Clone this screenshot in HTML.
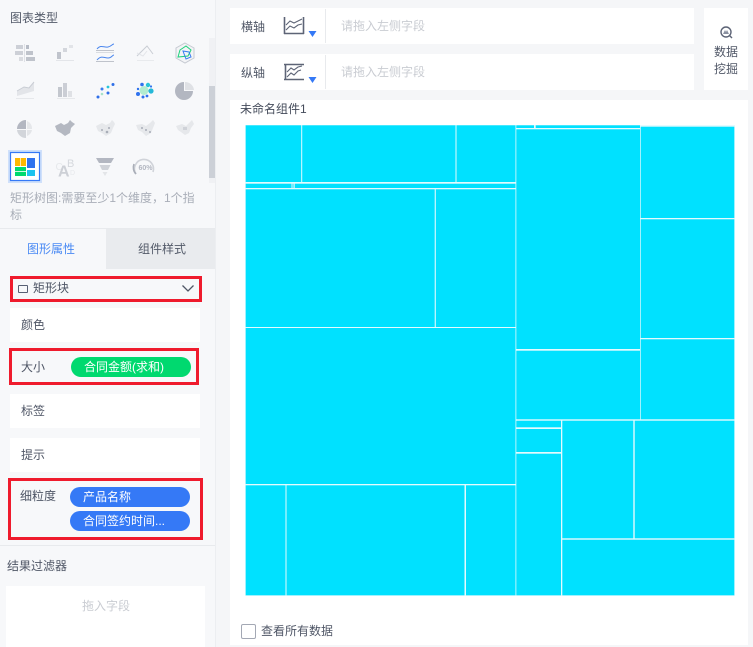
<!DOCTYPE html>
<html lang="zh">
<head>
<meta charset="utf-8">
<style>
html,body{margin:0;padding:0;width:753px;height:647px;overflow:hidden;background:#f5f6f8;}
body{position:relative;font-family:"Liberation Sans","Noto Sans CJK SC",sans-serif;font-size:12px;color:#4f5666;}
.a{position:absolute;}
.t{position:absolute;white-space:nowrap;line-height:16px;}
.w{position:absolute;background:#fff;}
.r{position:absolute;border:3px solid #ef1b2d;box-sizing:border-box;}
.p{position:absolute;border-radius:10px;height:20px;line-height:20px;color:#fff;font-size:12px;white-space:nowrap;box-sizing:border-box;padding-left:13px;}
</style>
</head>
<body>
<div class="a" style="left:0;top:0;width:215px;height:647px;background:#f7f8fa;"></div>
<div class="a" style="left:215px;top:0;width:1px;height:647px;background:#eceef1;"></div>
<div class="t" style="left:10px;top:10px;color:#535a69;">图表类型</div>

<!-- scrollbar -->
<div class="a" style="left:209px;top:38px;width:6px;height:145px;background:#f0f1f4;"></div>
<div class="a" style="left:209px;top:86px;width:6px;height:92px;background:#ccd0d7;"></div>

<!-- chart icons -->
<svg class="a" style="left:0;top:0;" width="215" height="190" viewBox="0 0 215 190">
  <!-- bar grid -->
  <g fill="#cdd0d7">
    <rect x="16" y="45" width="7" height="4"/><rect x="26" y="45" width="3" height="4" fill="#b7bcc6"/>
    <rect x="15" y="51" width="8" height="4"/><rect x="26" y="51" width="7" height="4" fill="#bfc3cb"/>
    <rect x="19" y="57" width="4" height="4" fill="#d9dbe0"/><rect x="26" y="57" width="9" height="4" fill="#bfc3cb"/>
    <rect x="24" y="44" width="1" height="18" fill="#dfe1e6"/>
  </g>
  <!-- stepped -->
  <rect x="57" y="52" width="4" height="7" fill="#c0c4cc"/>
  <rect x="63" y="48" width="4" height="4" fill="#d3d6dc"/>
  <rect x="69" y="45" width="4" height="3" fill="#e2e4e8"/>
  <rect x="56" y="60" width="18" height="1" fill="#e3e5e9"/>
  <!-- wave lines -->
  <g fill="none">
    <path d="M97 49C101 44 104 48 108 47S112 44 114 44" stroke="#4a86ee" stroke-width="1"/>
    <rect x="96" y="50" width="18" height="1" fill="#bfc3cb"/>
    <rect x="96" y="52" width="18" height="1" fill="#d9dce1"/>
    <path d="M97 60C101 55 104 58 108 58S112 55 114 55" stroke="#4a86ee" stroke-width="1"/>
    <rect x="96" y="61" width="18" height="1" fill="#bfc3cb"/>
  </g>
  <!-- area line -->
  <path d="M137 56L147 46L153 54" fill="none" stroke="#c9cdd4" stroke-width="1"/>
  <path d="M137 53L143 56L147 51" fill="none" stroke="#e3e5e9" stroke-width="1"/>
  <rect x="137" y="60" width="17" height="1" fill="#e8eaed"/>
  <!-- radar -->
  <path d="M185 43L194 48V58L185 63L176 58V48Z" fill="#f3f4f6" stroke="#c5c9d1" stroke-width="1"/>
  <path d="M180 50L186 46L191 50L188 56L178 57Z" fill="none" stroke="#1fd07c" stroke-width="1"/>
  <path d="M183 51L189 52L191 57L186 59Z" fill="none" stroke="#3a7cf0" stroke-width="1"/>
  <!-- area 2 -->
  <path d="M17 91L24 87L29 88L34 82V91L24 94L17 96Z" fill="#e3e5e9"/>
  <path d="M17 91L24 87L29 88L34 82" fill="none" stroke="#c9cdd4" stroke-width="1"/>
  <rect x="16" y="98" width="18" height="1" fill="#e6e8eb"/>
  <!-- columns -->
  <rect x="58" y="87" width="4" height="10" fill="#c3c7ce"/>
  <rect x="63" y="83" width="4" height="14" fill="#cbced5"/>
  <rect x="68" y="91" width="4" height="6" fill="#dfe1e5"/>
  <rect x="57" y="98" width="18" height="1" fill="#e6e8eb"/>
  <!-- scatter -->
  <circle cx="98" cy="97" r="1.5" fill="#2f6fe8"/><circle cx="102" cy="94" r="1.3" fill="#a8e3c8"/>
  <circle cx="102" cy="89" r="1.5" fill="#3a7cf0"/><circle cx="108" cy="93" r="1.5" fill="#2f6fe8"/>
  <circle cx="108" cy="87" r="1.4" fill="#26c6da"/><circle cx="113" cy="84.500" r="1.500" fill="#2f6fe8"/>
  <!-- bubble -->
  <circle cx="144" cy="90.500" r="4.500" fill="#b2ecd0"/>
  <circle cx="142" cy="84.500" r="1.800" fill="#2f72ee"/><circle cx="148" cy="85" r="2.200" fill="#29c4d8"/>
  <circle cx="151" cy="91" r="2.600" fill="#25b8d8"/><circle cx="138" cy="94" r="2" fill="#2f72ee"/>
  <circle cx="138" cy="89" r="1.200" fill="#2f72ee"/><circle cx="143" cy="97" r="1.500" fill="#2f72ee"/>
  <circle cx="147" cy="96" r="1.400" fill="#2f72ee"/><circle cx="151" cy="86.500" r="1.100" fill="#2f72ee"/>
  <!-- pie -->
  <path d="M184 82V91H193A9 9 0 1 1 184 82Z" fill="#b3b7c1"/>
  <path d="M185 82A9 9 0 0 1 194 90H185Z" fill="#dfe1e5"/>
  <!-- pie 2 -->
  <path d="M26 120V129H17A9 9 0 0 1 26 120Z" fill="#b3b7c1"/>
  <path d="M26 130V138A9 9 0 0 1 17 130Z" fill="#d2d5da"/>
  <path d="M27 121A8 8 0 0 1 32 129H27Z" fill="#e5e7ea"/>
  <path d="M27 130H32A8 8 0 0 1 27 136Z" fill="#e3e5e8"/>
  <!-- maps -->
  <path d="M55 126L61 123L64 125L68 123L70 120L72 122L75 124L71 128L70 133L65 136L61 133L57 131Z" fill="#b4b8c1"/>
  <g fill="#e6e8eb">
    <path d="M96 126L102 123L106 125L110 123L112 120L114 122L115 124L113 128L111 133L106 136L102 133L98 131Z"/>
    <path d="M136 125L142 124L146 126L150 123L153 120L155 123L153 128L151 133L146 136L142 132L138 130Z"/>
    <path d="M176 126L182 124L186 126L189 123L192 120L194 124L191 128L189 133L185 135L181 132L178 130Z"/>
  </g>
  <g fill="#a8adb7"><circle cx="102" cy="130" r="1"/><circle cx="107" cy="132" r="1.300"/><circle cx="109" cy="128" r="1"/>
  <circle cx="142" cy="128" r="1"/><circle cx="146" cy="130" r="1"/><circle cx="150" cy="132" r="1"/></g>
  <rect x="183" y="127" width="4" height="3" fill="#cfd2d8"/>
  <!-- treemap selected -->
  <rect x="8" y="150" width="34" height="33" fill="#cfe0fa"/>
  <rect x="10.500" y="152.500" width="29" height="28" fill="#fff" stroke="#3579f6" stroke-width="1.200"/>
  <rect x="15" y="158" width="11" height="8" fill="#ffb800"/><rect x="20" y="158" width=".7" height="8" fill="#fff"/>
  <rect x="15" y="167" width="11" height="9" fill="#00d96f"/><rect x="15" y="171" width="11" height=".8" fill="#fff"/>
  <rect x="27" y="158" width="8" height="10" fill="#2f72ee"/>
  <rect x="27" y="170" width="8" height="6" fill="#1cc3ee"/>
  <!-- funnel -->
  <path d="M96 158H114L111 163H99Z" fill="#b3b7c1"/>
  <path d="M99.500 165H110.500L108 170H102Z" fill="#cfd2d8"/>
  <path d="M102.500 172H107.500L105 176Z" fill="#e3e5e8"/>
  <!-- gauge -->
  <path d="M136 174A9.500 9.500 0 1 1 153 172" fill="none" stroke="#d0d3d9" stroke-width="1.600"/>
  <path d="M136 174A9.500 9.500 0 0 1 134 164" fill="none" stroke="#a9aeb8" stroke-width="1.600"/>
  <text x="145.500" y="170" font-size="7" font-weight="bold" fill="#b3b7c1" text-anchor="middle" font-family="Liberation Sans">60%</text>
  <!-- text icon -->
  <text x="55.500" y="170" font-size="10" fill="#e6e8eb" font-family="Liberation Sans">C</text>
  <text x="67" y="167" font-size="11" fill="#d5d8dd" font-family="Liberation Sans">B</text>
  <text x="58" y="176.500" font-size="16" font-weight="bold" fill="#cdd0d6" font-family="Liberation Sans">A</text>
  <text x="70" y="175" font-size="7" fill="#e6e8eb" font-family="Liberation Sans">D</text>
</svg>

<div class="t" style="left:10px;top:190px;width:192px;white-space:normal;line-height:17px;color:#a9aeb8;">矩形树图:需要至少1个维度，1个指标</div>

<!-- tabs -->
<div class="a" style="left:0;top:228px;width:215px;height:1px;background:#e8eaed;"></div>
<div class="a" style="left:106px;top:229px;width:109px;height:40px;background:#e9ebee;"></div>
<div class="t" style="left:27px;top:241px;color:#4a8af4;">图形属性</div>
<div class="t" style="left:138px;top:241px;color:#535a69;">组件样式</div>

<!-- 矩形块 -->
<div class="r" style="left:10px;top:276px;width:192px;height:26px;"></div>
<div class="a" style="left:18px;top:285px;width:8px;height:6px;border:1px solid #586074;border-radius:1px;"></div>
<div class="t" style="left:33px;top:280px;">矩形块</div>
<svg class="a" style="left:181px;top:284px;" width="14" height="9"><path d="M1.500 1.500L7 7L12.500 1.500" fill="none" stroke="#4f5666" stroke-width="1.300"/></svg>

<div class="w" style="left:10px;top:308px;width:190px;height:34px;"></div>
<div class="t" style="left:21px;top:317px;">颜色</div>

<div class="r" style="left:9px;top:348px;width:190px;height:37px;"></div>
<div class="t" style="left:21px;top:359px;">大小</div>
<div class="p" style="left:71px;top:357px;width:120px;background:#00d96f;">合同金额(求和)</div>

<div class="w" style="left:10px;top:394px;width:190px;height:34px;"></div>
<div class="t" style="left:21px;top:403px;">标签</div>

<div class="w" style="left:10px;top:438px;width:190px;height:34px;"></div>
<div class="t" style="left:21px;top:447px;">提示</div>

<div class="r" style="left:8px;top:478px;width:195px;height:62px;"></div>
<div class="t" style="left:20px;top:488px;">细粒度</div>
<div class="p" style="left:70px;top:487px;width:120px;background:#3579f6;">产品名称</div>
<div class="p" style="left:70px;top:511px;width:120px;background:#3579f6;">合同签约时间...</div>

<div class="a" style="left:0;top:545px;width:215px;height:1px;background:#e8eaed;"></div>
<div class="t" style="left:7px;top:558px;">结果过滤器</div>
<div class="w" style="left:6px;top:586px;width:199px;height:61px;"></div>
<div class="t" style="left:82px;top:598px;color:#c9ccd2;">拖入字段</div>

<!-- axes -->
<div class="w" style="left:230px;top:8px;width:464px;height:36px;"></div>
<div class="w" style="left:230px;top:54px;width:464px;height:36px;"></div>
<div class="a" style="left:325px;top:9px;width:1px;height:34px;background:#e8eaed;"></div>
<div class="a" style="left:325px;top:55px;width:1px;height:34px;background:#e8eaed;"></div>
<div class="t" style="left:241px;top:19px;">横轴</div>
<div class="t" style="left:241px;top:65px;">纵轴</div>
<div class="t" style="left:341px;top:18px;color:#c9ccd2;">请拖入左侧字段</div>
<div class="t" style="left:341px;top:64px;color:#c9ccd2;">请拖入左侧字段</div>
<svg class="a" style="left:282px;top:14px;" width="40" height="28">
  <path d="M2.500 3V20M21.500 3V20M2 19.500H22" fill="none" stroke="#5d6476" stroke-width="1.600"/>
  <path d="M4 11L8 7L12 9L16 7L20 5M4 16L8 12L12 14L16 11L20 10" fill="none" stroke="#5d6476" stroke-width="1.100"/>
  <path d="M26.500 17H34.500L30.500 23Z" fill="#3579f6"/>
</svg>
<svg class="a" style="left:282px;top:60px;" width="40" height="28">
  <path d="M2 4.500H22M2 19.500H22M3.500 4V20" fill="none" stroke="#5d6476" stroke-width="1.600"/>
  <path d="M5 12L9 8L12 10L16 7L20 6M5 17L9 13L12 15L16 11L19 10" fill="none" stroke="#5d6476" stroke-width="1.100"/>
  <path d="M26.500 17H34.500L30.500 23Z" fill="#3579f6"/>
</svg>

<!-- data mining -->
<div class="w" style="left:704px;top:8px;width:44px;height:82px;"></div>
<svg class="a" style="left:719px;top:25px;" width="15" height="15">
  <circle cx="7" cy="7" r="5" fill="none" stroke="#5d6476" stroke-width="1.400"/>
  <path d="M4 9L6 5L7 7L8 5L10 9Z" fill="#8a90a0"/>
  <path d="M10.500 10.500L13 13" stroke="#5d6476" stroke-width="1.400"/>
</svg>
<div class="t" style="left:714px;top:44px;">数据</div>
<div class="t" style="left:714px;top:61px;">挖掘</div>

<!-- main panel -->
<div class="w" style="left:230px;top:100px;width:518px;height:545px;"></div>
<div class="t" style="left:240px;top:101px;color:#444b5a;">未命名组件1</div>

<svg class="a" style="left:0;top:0;" width="753" height="647" viewBox="0 0 753 647">
  <rect x="245" y="125" width="490" height="471" fill="#e4fafe"/>
  <g fill="#00e1ff">
    <rect x="245.700" y="125.300" width="55.500" height="56.700"/>
    <rect x="302.200" y="125.300" width="153.300" height="56.700"/>
    <rect x="456.500" y="125.300" width="59" height="56.700"/>
    <rect x="245.700" y="183.700" width="45.800" height="4.300"/>
    <rect x="292.500" y="183.700" width="1" height="4.300"/>
    <rect x="294.700" y="183.700" width="220.800" height="4.300"/>
    <rect x="245.700" y="189.300" width="189" height="137.700"/>
    <rect x="435.800" y="189.300" width="79.700" height="137.700"/>
    <rect x="245.700" y="328" width="269.800" height="156"/>
    <rect x="245.700" y="485.300" width="39.800" height="110"/>
    <rect x="286.500" y="485.300" width="178" height="110"/>
    <rect x="466" y="485.300" width="49.500" height="110"/>
    <rect x="516.300" y="125.300" width="17.700" height="2.700"/>
    <rect x="535.700" y="125.300" width="104.300" height="2.700"/>
    <rect x="516.300" y="129.300" width="123.700" height="219.700"/>
    <rect x="516.300" y="350.700" width="123.700" height="68.600"/>
    <rect x="516.300" y="420.700" width="44.700" height="6.600"/>
    <rect x="516.300" y="429" width="44.700" height="23"/>
    <rect x="516.300" y="453.700" width="44.700" height="141.600"/>
    <rect x="562.300" y="420.700" width="71" height="117.600"/>
    <rect x="634.700" y="420.700" width="99.600" height="117.600"/>
    <rect x="562.300" y="539.700" width="172" height="55.600"/>
    <rect x="640.700" y="126.700" width="93.600" height="91.300"/>
    <rect x="640.700" y="219.300" width="93.600" height="118.700"/>
    <rect x="640.700" y="339.300" width="93.600" height="80"/>
  </g>
</svg>

<!-- checkbox -->
<div class="a" style="left:241px;top:624px;width:13px;height:13px;border:1px solid #a3a8b4;border-radius:2px;background:#fff;"></div>
<div class="t" style="left:261px;top:623px;">查看所有数据</div>
</body>
</html>
